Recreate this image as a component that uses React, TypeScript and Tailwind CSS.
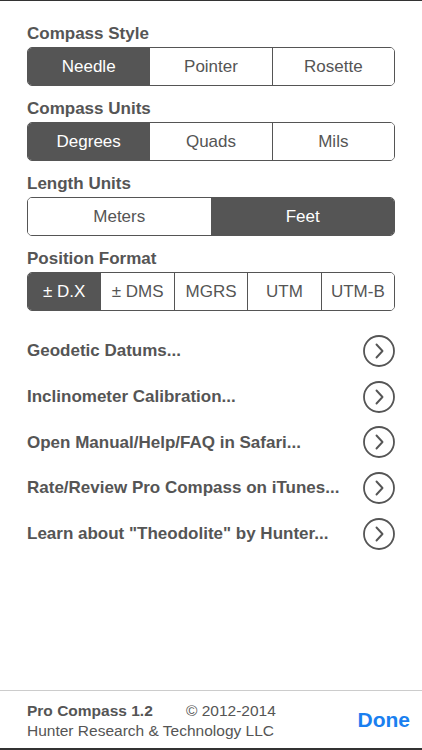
import React from "react";

const font = { fontFamily: '"Liberation Sans", Arial, sans-serif' };

function Segmented({ items, active }: { items: string[]; active: number }) {
  return (
    <div className="flex h-[39px] rounded-[5px] border border-[#555555] overflow-hidden">
      {items.map((it, i) => (
        <div
          key={it}
          className={
            "flex-1 flex items-center justify-center text-[17px] " +
            (i > 0 ? "border-l border-[#555555] " : "") +
            (i === active ? "bg-[#555555] text-white" : "bg-white text-[#555555]")
          }
        >
          {it}
        </div>
      ))}
    </div>
  );
}

function Section({ label, items, active, last }: { label: string; items: string[]; active: number; last?: boolean }) {
  return (
    <div className={last ? "" : "mb-[12px]"}>
      <div className="h-[20px] leading-[20px] text-[17px] font-bold text-[#555555] mb-[4px] pt-[1px]">{label}</div>
      <Segmented items={items} active={active} />
    </div>
  );
}

function Chevron() {
  return (
    <svg width="34" height="34" viewBox="0 0 34 34" fill="none">
      <circle cx="17" cy="17" r="15" stroke="#555555" strokeWidth="1.8" />
      <path d="M14.5 10.5 L20.5 17 L14.5 23.5" stroke="#555555" strokeWidth="1.9" strokeLinecap="round" strokeLinejoin="round" />
    </svg>
  );
}

function Row({ text }: { text: string }) {
  return (
    <div className="h-[45.75px] flex items-center justify-between">
      <span className="text-[17px] font-bold text-[#555555]">{text}</span>
      <span className="mr-[-1px]">
        <Chevron />
      </span>
    </div>
  );
}

export default function App() {
  return (
    <div style={font} className="w-[422px] h-[750px] bg-white flex flex-col border-t border-[#333333] border-b-2 border-b-[#333333]">
      <div className="px-[27px] pt-[22px]">
        <Section label="Compass Style" items={["Needle", "Pointer", "Rosette"]} active={0} />
        <Section label="Compass Units" items={["Degrees", "Quads", "Mils"]} active={0} />
        <Section label="Length Units" items={["Meters", "Feet"]} active={1} />
        <Section label="Position Format" items={["± D.X", "± DMS", "MGRS", "UTM", "UTM-B"]} active={0} last />
        <div className="mt-[17px]">
          <Row text="Geodetic Datums..." />
          <Row text="Inclinometer Calibration..." />
          <Row text="Open Manual/Help/FAQ in Safari..." />
          <Row text={'Rate/Review Pro Compass on iTunes...'} />
          <Row text={'Learn about "Theodolite" by Hunter...'} />
        </div>
      </div>
      <div className="flex-1" />
      <div className="h-[58px] border-t border-[#cccccc] flex items-center justify-between pl-[27px] pr-[12px]">
        <div className="text-[15.5px] leading-[20px] text-[#555555] pt-[2px]">
          <div className="flex">
            <span className="font-bold w-[159px]">Pro Compass 1.2</span>
            <span>© 2012-2014</span>
          </div>
          <div>Hunter Research &amp; Technology LLC</div>
        </div>
        <div className="text-[21px] font-bold text-[#1a7ff0]">Done</div>
      </div>
    </div>
  );
}
